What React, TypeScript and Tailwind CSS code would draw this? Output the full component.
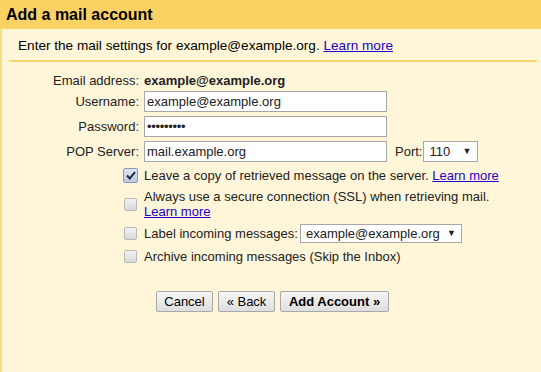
import React from "react";

function Check({ checked = false }: { checked?: boolean }) {
  return checked ? (
    <span className="flex h-[15px] w-[15px] shrink-0 items-center justify-center rounded-[2px] border border-[#8a9ac0] bg-gradient-to-b from-[#dfe6f3] to-[#bcc8e0]">
      <svg width="10" height="9" viewBox="0 0 10 9">
        <path d="M1 4.5 L3.8 7.4 L9 1.2" fill="none" stroke="#1e2a44" strokeWidth="2" />
      </svg>
    </span>
  ) : (
    <span className="block h-[13px] w-[13px] shrink-0 rounded-[2px] border border-[#b9b9b9] bg-gradient-to-b from-[#f2f2f2] to-[#d9d9d9]" />
  );
}

function Link({ children }: { children: React.ReactNode }) {
  return <span className="text-[#2200cc] underline">{children}</span>;
}

function Btn({ children, bold = false, w }: { children: React.ReactNode; bold?: boolean; w: string }) {
  return (
    <div
      className={`flex h-[21px] items-center justify-center rounded-[2px] border border-[#a9a9a9] bg-gradient-to-b from-[#f6f6f6] to-[#dedede] ${w} ${bold ? "font-bold" : ""}`}
    >
      {children}
    </div>
  );
}

export default function App() {
  return (
    <div
      className="flex h-[372px] w-[541px] flex-col overflow-hidden bg-[#fff6d9] text-[13px] leading-[15px] text-[#222]"
      style={{ fontFamily: '"Liberation Sans", Arial, sans-serif' }}
    >
      <div className="flex h-[29px] shrink-0 items-center bg-[#fad163] pl-[6px] text-[16px] font-bold text-black">
        Add a mail account
      </div>
      <div className="flex flex-1 flex-col border-l-2 border-[#f8dd86]">
        <div className="mt-[9px] flex h-[15px] items-center pl-[16px] text-[13.6px] text-black">
          Enter the mail settings for example@example.org.&nbsp;<Link>Learn more</Link>
        </div>
        <div className="ml-[7px] mr-[4px] mt-[7px] h-[2px] bg-[#f8d56f]" />

        <div className="mt-[8px] flex h-[21px] items-center">
          <div className="w-[137px] text-right">Email address:</div>
          <div className="ml-[5px] font-bold">example@example.org</div>
        </div>

        <div className="flex h-[21px] items-center">
          <div className="w-[137px] text-right">Username:</div>
          <div className="ml-[5px] flex h-[21px] w-[243px] items-center border border-[#a7a7a7] bg-white pl-[2px]">
            example@example.org
          </div>
        </div>

        <div className="mt-[4px] flex h-[21px] items-center">
          <div className="w-[137px] text-right">Password:</div>
          <div className="ml-[5px] flex h-[21px] w-[243px] items-center border border-[#a7a7a7] bg-white pl-[2px] text-[13px] tracking-[-0.3px]">
            •••••••••
          </div>
        </div>

        <div className="mt-[4px] flex h-[21px] items-center">
          <div className="w-[137px] text-right">POP Server:</div>
          <div className="ml-[5px] flex h-[21px] w-[243px] items-center border border-[#a7a7a7] bg-white pl-[2px]">
            mail.example.org
          </div>
          <div className="ml-[8px]">Port:</div>
          <div className="ml-[1px] flex h-[21px] w-[55px] items-center justify-between border border-[#a7a7a7] bg-white pl-[5px] pr-[6px]">
            <span>110</span>
            <span className="text-[9px]">▼</span>
          </div>
        </div>

        <div className="mt-[5px] flex h-[16px] items-center pl-[121px]">
          <Check checked />
          <div className="ml-[6px]">
            Leave a copy of retrieved message on the server. <Link>Learn more</Link>
          </div>
        </div>

        <div className="mt-[6px] flex items-center pl-[122px]">
          <Check />
          <div className="ml-[7px]">
            <div>Always use a secure connection (SSL) when retrieving mail.</div>
            <div>
              <Link>Learn more</Link>
            </div>
          </div>
        </div>

        <div className="mt-[4px] flex h-[20px] items-center pl-[122px]">
          <Check />
          <div className="ml-[7px]">Label incoming messages:</div>
          <div className="ml-[2px] flex h-[19px] w-[162px] items-center justify-between border border-[#a7a7a7] bg-white pl-[5px] pr-[5px]">
            <span>example@example.org</span>
            <span className="text-[9px]">▼</span>
          </div>
        </div>

        <div className="mt-[5px] flex h-[16px] items-center pl-[122px]">
          <Check />
          <div className="ml-[7px]">Archive incoming messages (Skip the Inbox)</div>
        </div>

        <div className="mt-[27px] flex gap-[5px] pl-[154px] text-black">
          <Btn w="w-[57px]">Cancel</Btn>
          <Btn w="w-[57px]">« Back</Btn>
          <Btn w="w-[109px]" bold>
            Add Account »
          </Btn>
        </div>
      </div>
    </div>
  );
}
